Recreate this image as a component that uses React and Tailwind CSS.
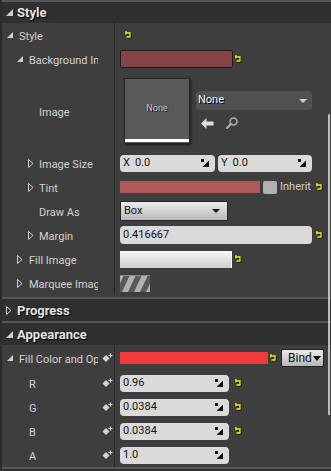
import React from "react";

const LABEL = "text-[11px] leading-none text-[#d2d2d2] whitespace-nowrap";

function OpenTri({ size = 6 }) {
  return (
    <svg width={size} height={size} viewBox={`0 0 ${size} ${size}`}>
      <polygon points={`${size},0 ${size},${size} 0,${size}`} fill="#d0d0d0" />
    </svg>
  );
}

function ClosedTri() {
  return (
    <svg width="6" height="9" viewBox="0 0 6 9">
      <polygon points="0.5,0.5 5,4.5 0.5,8.5" fill="none" stroke="#cfcfcf" strokeWidth="1" />
    </svg>
  );
}

function Reset() {
  return (
    <svg width="9" height="10" viewBox="0 0 9 10" className="shrink-0">
      <g transform="translate(0.8,0.8)" stroke="#000" strokeWidth="1.3" fill="none">
        <path d="M1.5 3H6V7H2.5" />
        <path d="M2 1V4.5" />
      </g>
      <g stroke="#f4f400" strokeWidth="1.3" fill="none">
        <path d="M1.5 3H6V7H2.5" />
        <path d="M2 1V4.5" />
      </g>
    </svg>
  );
}

function Corner() {
  return (
    <svg width="8" height="8" viewBox="0 0 8 8" className="shrink-0">
      <rect x="0" y="0" width="3" height="3" fill="#111" />
      <polygon points="8,1.5 8,8 1.5,8" fill="#111" />
    </svg>
  );
}

function Key() {
  return (
    <svg width="11" height="10" viewBox="0 0 11 10">
      <polygon points="4,2 7.5,5.5 4,9 0.5,5.5" fill="#d4d4d4" />
      <path d="M8.5 0.5V4.5M6.5 2.5H10.5" stroke="#d4d4d4" strokeWidth="1.2" />
    </svg>
  );
}

const PADS = ["pl-[5px]", "pl-[15px]", "pl-[26px]"];
const TRIW = ["w-[12px]", "w-[12px]", "w-[11px]"];

function Row({ h = "h-6", level = 0, exp, label, keyIcon, children, valueClass = "items-center" }) {
  return (
    <div className={`flex ${h}`}>
      <div className={`w-[113px] shrink-0 border-r border-[#282828] flex items-center ${PADS[level]}`}>
        <div className={`${TRIW[level]} shrink-0 flex items-center`}>
          {exp === "open" && <OpenTri />}
          {exp === "closed" && <ClosedTri />}
        </div>
        <div className="flex-1 min-w-0 overflow-hidden">
          <span className={LABEL}>{label}</span>
        </div>
        <div className="w-[16px] shrink-0 flex items-center pl-[4px]">{keyIcon && <Key />}</div>
      </div>
      <div className={`flex-1 flex pl-[5px] ${valueClass}`}>{children}</div>
    </div>
  );
}

function Header({ open, label }) {
  return (
    <div className="h-[22px] bg-[#2f2f2f] flex items-center pl-[4px]">
      <div className="w-[11px] flex items-center">
        {open ? <OpenTri size={7} /> : <ClosedTri />}
      </div>
      <span className="text-[13px] font-bold leading-none text-[#e4e4e4] [text-shadow:1px_1px_1px_#000]">
        {label}
      </span>
    </div>
  );
}

function NumField({ w, value, prefix }) {
  return (
    <div className={`${w} h-[17px] rounded-[4px] bg-[#dadada] flex items-center pl-[3px] pr-[6px]`}>
      {prefix && <span className="text-[11px] text-[#1a1a1a] mr-[5px]">{prefix}</span>}
      <span className="text-[11px] text-[#111] flex-1">{value}</span>
      <Corner />
    </div>
  );
}

function Stripes() {
  return (
    <svg width="30" height="17" viewBox="0 0 30 17">
      <rect width="30" height="17" fill="#5a5a5a" />
      {[-10, 2, 14, 26].map((x) => (
        <polygon key={x} points={`${x},17 ${x + 6},17 ${x + 14},0 ${x + 8},0`} fill="#b2b2b2" />
      ))}
      <rect width="30" height="1" fill="#8a8a8a" />
    </svg>
  );
}

export default function App() {
  return (
    <div className="w-[331px] h-[471px] bg-[#3e3e3e] flex relative overflow-hidden [font-family:Roboto,'Liberation_Sans',sans-serif]">
      <div className="w-[2px] shrink-0 bg-[#2c2c2c]" />
      <div className="flex-1 flex flex-col">
        <div className="h-[2px] bg-[#575757]" />
        <div className="h-[21px] bg-[#2f2f2f] flex items-center pl-[4px]">
          <div className="w-[11px] flex items-center">
            <OpenTri size={7} />
          </div>
          <span className="text-[13px] font-bold leading-none text-[#e4e4e4] [text-shadow:1px_1px_1px_#000]">
            Style
          </span>
        </div>

        <Row level={0} exp="open" label="Style">
          <div className="ml-[4px]">
            <Reset />
          </div>
        </Row>
        <Row level={1} exp="open" label="Background Image">
          <div className="w-[113px] h-[18px] rounded-[2px] bg-[#874444] border border-[#1c1c1c]" />
          <div className="ml-[1px]">
            <Reset />
          </div>
        </Row>
        <Row h="h-[80px]" level={2} label="Image" valueClass="items-start">
          <div className="ml-[4px] mt-[7px] w-[66px] h-[66px] bg-[#595959] border border-[#262626] shadow-[1px_1px_2px_#1a1a1a] flex flex-col">
            <div className="flex-1 flex items-center justify-center">
              <span className="text-[9px] text-[#c4c4c4] [text-shadow:1px_1px_0_#222]">None</span>
            </div>
            <div className="h-[3px] bg-white mb-[1px]" />
          </div>
          <div className="ml-[6px] mt-[20px] flex flex-col">
            <div className="w-[116px] h-[19px] rounded-[3px] bg-[#515151] flex items-center pl-[2px] pr-[5px]">
              <span className="flex-1 text-[11px] text-[#f4f4f4] [text-shadow:1px_1px_0_#000]">None</span>
              <svg width="8" height="4" viewBox="0 0 8 4">
                <polygon points="0,0 8,0 4,4" fill="#cfcfcf" />
              </svg>
            </div>
            <div className="flex items-center mt-[7px] pl-[5px]">
              <svg width="13" height="11" viewBox="0 0 13 11">
                <polygon points="0,5.5 5.5,0 5.5,3.5 12.5,3.5 12.5,7.5 5.5,7.5 5.5,11" fill="#dcdcdc" />
              </svg>
              <svg width="14" height="12" viewBox="0 0 14 12" className="ml-[11px]">
                <circle cx="8.5" cy="4.5" r="3.5" fill="none" stroke="#b0b0b0" strokeWidth="1.5" />
                <path d="M6 7L2 11" stroke="#b0b0b0" strokeWidth="2" strokeLinecap="round" />
              </svg>
            </div>
          </div>
        </Row>
        <Row level={2} exp="closed" label="Image Size">
          <NumField w="w-[95px]" prefix="X" value="0.0" />
          <div className="ml-[3px]">
            <NumField w="w-[94px]" prefix="Y" value="0.0" />
          </div>
        </Row>
        <Row level={2} exp="closed" label="Tint">
          <div className="w-[140px] h-[12px] bg-[#b15a5a]" />
          <div className="ml-[3px] w-[14px] h-[13px] rounded-[2px] bg-[#b1b1b1]" />
          <span className="ml-[3px] text-[11px] text-[#d0d0d0]">Inherit</span>
          <div className="ml-[4px]">
            <Reset />
          </div>
        </Row>
        <Row level={2} label="Draw As">
          <div className="w-[108px] h-[20px] border border-[#262626] rounded-[1px] bg-gradient-to-b from-[#ececec] to-[#b9b9b9] flex items-center pl-[3px] pr-[7px]">
            <span className="flex-1 text-[11px] text-[#111]">Box</span>
            <svg width="8" height="4" viewBox="0 0 8 4">
              <polygon points="0,0 8,0 4,4" fill="#111" />
            </svg>
          </div>
        </Row>
        <Row level={2} exp="closed" label="Margin">
          <div className="w-[192px] h-[18px] rounded-[4px] bg-[#dadada] flex items-center pl-[3px]">
            <span className="text-[11px] text-[#111]">0.416667</span>
          </div>
          <div className="ml-[3px]">
            <Reset />
          </div>
        </Row>
        <Row level={1} exp="closed" label="Fill Image">
          <div className="w-[112px] h-[17px] bg-gradient-to-b from-[#f6f6f6] to-[#cfcfcf] border-r border-[#f8f8f8]" />
          <div className="ml-[2px]">
            <Reset />
          </div>
        </Row>
        <Row level={1} exp="closed" label="Marquee Image">
          <Stripes />
        </Row>

        <div className="h-[2px]" />
        <div className="h-[2px] bg-[#575757]" />
        <Header open={false} label="Progress" />
        <div className="h-[2px] bg-[#575757]" />
        <Header open label="Appearance" />

        <Row h="h-[26px]" level={0} exp="open" label="Fill Color and Opacity" keyIcon>
          <div className="w-[148px] h-[12px] bg-[#f33a3a]" />
          <div className="ml-[1px]">
            <Reset />
          </div>
          <div className="ml-[3px] w-[43px] h-[18px] rounded-[2px] border border-[#222] bg-gradient-to-b from-[#ececec] to-[#b5b5b5] flex items-center pl-[6px]">
            <span className="text-[12px] text-[#111] leading-none">Bind</span>
            <svg width="8" height="5" viewBox="0 0 8 5" className="ml-[1px]">
              <polygon points="0,0 8,0 4,5" fill="#111" />
            </svg>
          </div>
        </Row>
        <Row level={1} label="R" keyIcon>
          <NumField w="w-[109px]" value="0.96" />
          <div className="ml-[5px]">
            <Reset />
          </div>
        </Row>
        <Row level={1} label="G" keyIcon>
          <NumField w="w-[109px]" value="0.0384" />
          <div className="ml-[5px]">
            <Reset />
          </div>
        </Row>
        <Row level={1} label="B" keyIcon>
          <NumField w="w-[109px]" value="0.0384" />
          <div className="ml-[5px]">
            <Reset />
          </div>
        </Row>
        <Row level={1} label="A" keyIcon>
          <NumField w="w-[109px]" value="1.0" />
        </Row>
        <div className="h-[2px] bg-[#575757]" />
        <div className="flex-1 bg-[#2e2e2e]" />
      </div>
      <div className="absolute left-[328px] top-[114px] w-[2px] h-[301px] rounded-t-[1px] bg-[#bdbdbd]" />
    </div>
  );
}
